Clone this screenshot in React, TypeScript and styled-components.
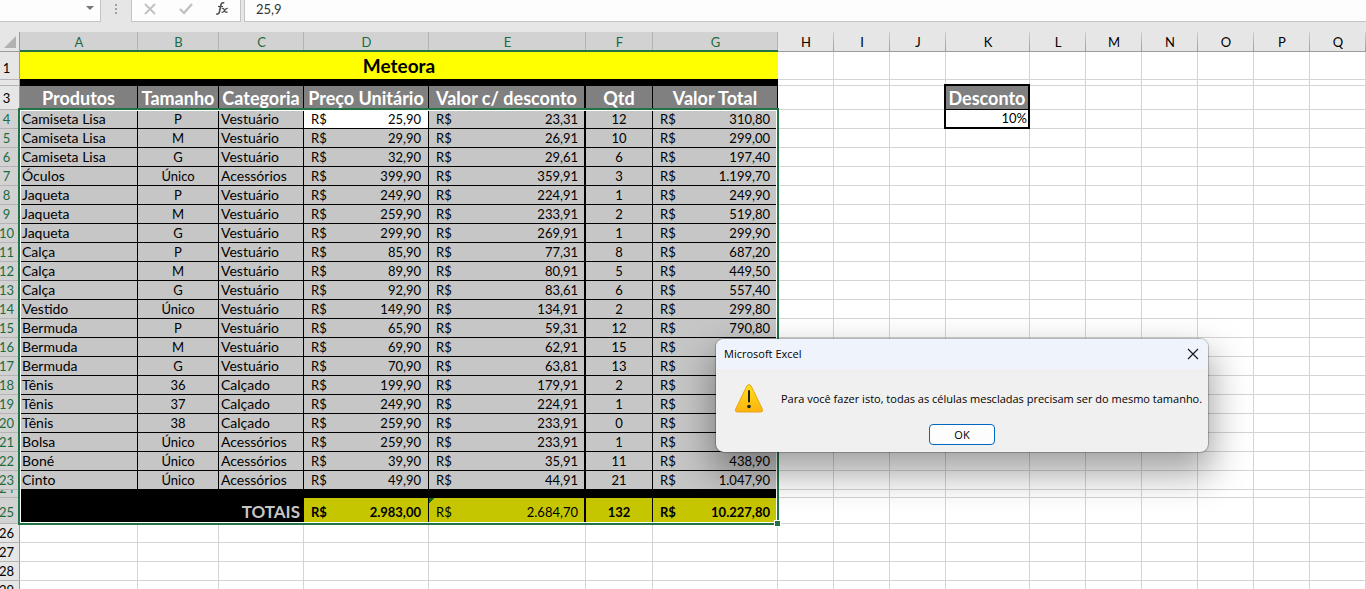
import React from "react";
import styled, { createGlobalStyle, css } from "styled-components";

const GREEN = "#217346";
const GRID = "#d4d4d4";
const CHROME = "#e6e6e6";
const SELECTED = "#c6c6c6";

const GlobalStyle = createGlobalStyle`
  *, *::before, *::after { box-sizing: border-box; }
  body { margin: 0; background: #fff; }
  button, input { font: inherit; color: inherit; margin: 0; padding: 0; }
`;

const Page = styled.main`
  display: flex;
  flex-direction: column;
  height: 100vh;
  overflow: hidden;
  font-family: Lato, "Liberation Sans", sans-serif;
  font-size: 13px;
  line-height: 18px;
  color: #000;
`;

/* ---------- formula bar ---------- */

const FormulaBar = styled.div`
  display: flex;
  flex: none;
  height: 32px;
  padding-bottom: 10px;
  background: ${CHROME};
`;

const NameBox = styled.div`
  display: flex;
  width: 101px;
  background: #fdfdfd;
  border: solid #c3c3c3;
  border-width: 0 1px 1px 0;
`;

const NameInput = styled.input`
  flex: 1;
  min-width: 0;
  border: 0;
  background: none;
`;

const DropButton = styled.button`
  display: flex;
  justify-content: center;
  width: 20px;
  padding-top: 6px;
  border: 0;
  background: none;
`;

const Grip = styled.div`
  display: flex;
  justify-content: center;
  width: 30px;
  padding-top: 4px;
`;

const FormulaActions = styled.div`
  display: flex;
  width: 110px;
  margin-right: 3px;
  background: #fdfdfd;
  border: solid #c3c3c3;
  border-width: 0 1px 1px;
`;

const ActionButton = styled.button`
  display: flex;
  flex: 1;
  align-items: flex-start;
  justify-content: center;
  border: 0;
  background: none;
`;

const FormulaInput = styled.input`
  flex: 1;
  min-width: 0;
  && { padding: 0 11px 3px; }
  border: solid #c3c3c3;
  border-width: 0 0 1px 1px;
  background: #fdfdfd;
  color: #333;
`;

/* ---------- sheet ---------- */

const SheetArea = styled.div`
  position: relative;
  flex: 1;
  min-height: 0;
  overflow: hidden;
`;

const Sheet = styled.table`
  width: 100%;
  min-width: 1366px;
  table-layout: fixed;
  border-collapse: separate;
  border-spacing: 0;
`;

const Col = styled.col<{ $w?: number }>`
  width: ${(p) => (p.$w ? `${p.$w}px` : "auto")};
`;

const Row = styled.tr<{ $h: number }>`
  height: ${(p) => p.$h}px;
  line-height: ${(p) => (p.$h > 22 ? 22 : 18)}px;
`;

const Corner = styled.td`
  padding: 4px 3px 3px 4px;
  line-height: 0;
  background: ${CHROME};
  border: solid #9b9b9b;
  border-width: 0 1px 1px 0;
  vertical-align: top;
`;

const ColumnHead = styled.th<{ $on: boolean }>`
  padding: 0;
  font-weight: 400;
  vertical-align: bottom;
  color: ${(p) => (p.$on ? "#1c6b40" : "#000")};
  background:
    linear-gradient(${(p) => (p.$on ? "#b4b4b4, #b4b4b4" : "#cfcfcf, #9b9b9b")}) right / 1px 100% no-repeat
    ${(p) => (p.$on ? "#d2d2d2" : CHROME)};
  border-bottom: 1px solid ${(p) => (p.$on ? GREEN : "#9b9b9b")};
  box-shadow: ${(p) => (p.$on ? `inset 0 -1px ${GREEN}` : "none")};
`;

const RowHead = styled.th<{ $on: boolean }>`
  padding: 0 6px 0 0;
  font-weight: 400;
  vertical-align: bottom;
  color: ${(p) => (p.$on ? "#1c6b40" : "#000")};
  background: ${(p) => (p.$on ? "#d2d2d2" : CHROME)};
  border: solid #9b9b9b;
  border-width: 0 1px 1px 0;
  border-bottom-color: #b4b4b4;
`;

const RowNumber = styled.div<{ $h: number }>`
  display: flex;
  align-items: flex-end;
  justify-content: center;
  height: ${(p) => p.$h - 1}px;
  overflow: ${(p) => (p.$h < 18 ? "hidden" : "visible")};
`;

const Cell = styled.td`
  padding: 0;
  vertical-align: bottom;
  white-space: nowrap;
  border: solid ${GRID};
  border-width: 0 1px 1px 0;
`;

const TitleCell = styled(Cell)`
  background: #ff0;
  border-color: #000;
  border-right: 0;
  font-size: 19px;
  font-weight: 700;
  line-height: 26px;
  text-align: center;
`;

const Band = styled(Cell)`
  background: #000;
  border-color: #000;
`;

const HeadCell = styled.th<{ $thick?: boolean }>`
  padding: 0;
  vertical-align: bottom;
  white-space: nowrap;
  background: #808080;
  color: #fff;
  font-size: 18px;
  font-weight: 700;
  text-align: center;
  border: solid #000;
  border-width: 0 ${(p) => (p.$thick ? 2 : 1)}px 1px 0;
`;

const DataCell = styled(Cell)<{ $align?: string; $thick?: boolean; $active?: boolean }>`
  padding: 0 ${(p) => (p.$thick ? 1 : 2)}px 0 2px;
  background: ${(p) => (p.$active ? "#fff" : SELECTED)};
  border-color: #000;
  border-right-width: ${(p) => (p.$thick ? 2 : 1)}px;
  text-align: ${(p) => p.$align ?? "left"};
`;

const LabelCell = styled(DataCell)`
  font-size: 14px;
`;

const TotalCell = styled(DataCell)<{ $bold?: boolean; $flag?: boolean }>`
  background: #c6c600;
  font-weight: ${(p) => (p.$bold ? 700 : 400)};
  ${(p) =>
    p.$flag &&
    css`
      background: linear-gradient(135deg, #0b6b12 4px, transparent 4px), #c6c600;
    `}
`;

const TotalLabel = styled(Cell)`
  padding: 0 3px;
  background: #000;
  border-color: #000;
  color: ${SELECTED};
  font-size: 17px;
  font-weight: 700;
  text-align: right;
`;

const MoneyRow = styled.div`
  display: flex;
  justify-content: space-between;
  padding: 0 5px;
`;

const DiscountHead = styled(HeadCell)`
  border-width: 0 2px 1px 0;
  box-shadow: -2px 0 #000, 0 -2px #000, -2px -2px #000;
`;

const DiscountCell = styled(Cell)`
  padding-right: 1px;
  background: #fff;
  border: solid #000;
  border-width: 0 2px 2px 0;
  box-shadow: -2px 0 #000;
  line-height: 17px;
  text-align: right;
`;

const SelectionFrame = styled.div`
  position: absolute;
  top: 76px;
  left: 18px;
  width: 761px;
  height: 417px;
  border: 2px solid ${GREEN};
  box-shadow: inset 0 0 0 1px #fff;
  pointer-events: none;

  &::after {
    content: "";
    position: absolute;
    right: -4px;
    bottom: -4px;
    width: 7px;
    height: 7px;
    background: ${GREEN};
    border: 1px solid #fff;
  }
`;

/* ---------- message box ---------- */

const Dialog = styled.section`
  position: absolute;
  top: 339px;
  left: 716px;
  width: 492px;
  overflow: hidden;
  border-radius: 8px;
  background: #f0f0f0;
  box-shadow: 0 0 1px 1px rgba(0, 0, 0, 0.25), 0 18px 36px 4px rgba(0, 0, 0, 0.36);
  font-family: "Open Sans", "Noto Sans", sans-serif;
  font-size: 11px;
  line-height: 16px;
`;

const DialogTitle = styled.header`
  display: flex;
  align-items: center;
  justify-content: space-between;
  height: 30px;
  padding: 0 9px 0 8px;
  background: #eff3fb;
`;

const DialogName = styled.h1`
  margin: 0;
  font-size: 11px;
  font-weight: 400;
`;

const CloseButton = styled.button`
  display: flex;
  padding: 0;
  border: 0;
  background: none;
`;

const DialogBody = styled.div`
  display: flex;
  align-items: center;
  gap: 17px;
  padding: 15px 12px 0 18px;

  svg { flex: none; }
`;

const Message = styled.p`
  margin: 0;
  white-space: nowrap;
`;

const DialogFooter = styled.footer`
  display: flex;
  justify-content: center;
  padding: 10px 0 7px;
`;

const OkButton = styled.button`
  width: 66px;
  height: 21px;
  border: 1px solid #0067c0;
  border-radius: 4px;
  background: #fdfdfd;
`;

/* ---------- data ---------- */

const columns: { name: string; w?: number }[] = [
  { name: "A", w: 118 },
  { name: "B", w: 81 },
  { name: "C", w: 85 },
  { name: "D", w: 125 },
  { name: "E", w: 157 },
  { name: "F", w: 67 },
  { name: "G", w: 125 },
  { name: "H", w: 56 },
  { name: "I", w: 56 },
  { name: "J", w: 56 },
  { name: "K", w: 84 },
  { name: "L", w: 56 },
  { name: "M", w: 56 },
  { name: "N", w: 56 },
  { name: "O", w: 56 },
  { name: "P", w: 56 },
  { name: "Q" },
];

const headings = ["Produtos", "Tamanho", "Categoria", "Preço Unitário", "Valor c/ desconto", "Qtd", "Valor Total"];

const products: string[][] = [
  ["Camiseta Lisa", "P", "Vestuário", "25,90", "23,31", "12", "310,80"],
  ["Camiseta Lisa", "M", "Vestuário", "29,90", "26,91", "10", "299,00"],
  ["Camiseta Lisa", "G", "Vestuário", "32,90", "29,61", "6", "197,40"],
  ["Óculos", "Único", "Acessórios", "399,90", "359,91", "3", "1.199,70"],
  ["Jaqueta", "P", "Vestuário", "249,90", "224,91", "1", "249,90"],
  ["Jaqueta", "M", "Vestuário", "259,90", "233,91", "2", "519,80"],
  ["Jaqueta", "G", "Vestuário", "299,90", "269,91", "1", "299,90"],
  ["Calça", "P", "Vestuário", "85,90", "77,31", "8", "687,20"],
  ["Calça", "M", "Vestuário", "89,90", "80,91", "5", "449,50"],
  ["Calça", "G", "Vestuário", "92,90", "83,61", "6", "557,40"],
  ["Vestido", "Único", "Vestuário", "149,90", "134,91", "2", "299,80"],
  ["Bermuda", "P", "Vestuário", "65,90", "59,31", "12", "790,80"],
  ["Bermuda", "M", "Vestuário", "69,90", "62,91", "15", ""],
  ["Bermuda", "G", "Vestuário", "70,90", "63,81", "13", ""],
  ["Tênis", "36", "Calçado", "199,90", "179,91", "2", ""],
  ["Tênis", "37", "Calçado", "249,90", "224,91", "1", ""],
  ["Tênis", "38", "Calçado", "259,90", "233,91", "0", ""],
  ["Bolsa", "Único", "Acessórios", "259,90", "233,91", "1", ""],
  ["Boné", "Único", "Acessórios", "39,90", "35,91", "11", "438,90"],
  ["Cinto", "Único", "Acessórios", "49,90", "44,91", "21", "1.047,90"],
];

const Money = ({ value }: { value: string }) => (
  <MoneyRow>
    <span>R$</span>
    <span>{value}</span>
  </MoneyRow>
);

const Blank = ({ count }: { count: number }) => (
  <>
    {Array.from({ length: count }, (_, i) => (
      <Cell key={i} />
    ))}
  </>
);

const SheetRow = ({ n, h = 19, children }: { n: number; h?: number; children: React.ReactNode }) => (
  <Row $h={h}>
    <RowHead scope="row" $on={n >= 4 && n <= 25}>
      <RowNumber $h={h}>{n === 2 ? null : n}</RowNumber>
    </RowHead>
    {children}
  </Row>
);

const ProductRow = ({ n, item }: { n: number; item: string[] }) => (
  <SheetRow n={n}>
    <LabelCell>{item[0]}</LabelCell>
    <DataCell $align="center">{item[1]}</DataCell>
    <LabelCell>{item[2]}</LabelCell>
    <DataCell $active={n === 4}>
      <Money value={item[3]} />
    </DataCell>
    <DataCell $thick>
      <Money value={item[4]} />
    </DataCell>
    <DataCell $align="center">{item[5]}</DataCell>
    <DataCell>
      <Money value={item[6]} />
    </DataCell>
    {n === 4 ? (
      <>
        <Blank count={3} />
        <DiscountCell>10%</DiscountCell>
        <Blank count={6} />
      </>
    ) : (
      <Blank count={10} />
    )}
  </SheetRow>
);

const WarningIcon = () => (
  <svg width="30" height="30" viewBox="0 0 30 30" aria-hidden="true">
    <defs>
      <linearGradient id="warn" x1="0" y1="0" x2="0" y2="1">
        <stop offset="0" stopColor="#ffe11a" />
        <stop offset="1" stopColor="#fdb30f" />
      </linearGradient>
    </defs>
    <path
      d="M12.9 1.9Q15 -1 17.1 1.9L28.4 25.2Q29.3 27.9 26.8 28H3.2Q.7 27.9 1.6 25.2Z"
      fill="url(#warn)"
      stroke="#e9a21a"
      strokeWidth="1"
    />
    <path d="M15 7V17.5" stroke="#1e1e1e" strokeWidth="2" strokeLinecap="round" />
    <circle cx="15" cy="22.5" r="1.8" fill="#1e1e1e" />
  </svg>
);

export default function App() {
  return (
    <Page>
      <GlobalStyle />
      <FormulaBar>
        <NameBox>
          <NameInput aria-label="Caixa de nome" />
          <DropButton aria-label="Abrir lista de nomes">
            <svg width="8" height="4" viewBox="0 0 8 4">
              <path d="M0 0H8L4 4Z" fill="#777" />
            </svg>
          </DropButton>
        </NameBox>
        <Grip>
          <svg width="2" height="11" viewBox="0 0 2 11">
            <path d="M0 0h2v2H0zM0 4h2v2H0zM0 8h2v2H0z" fill="#a0a0a0" />
          </svg>
        </Grip>
        <FormulaActions>
          <ActionButton aria-label="Cancelar">
            <svg width="14" height="16" viewBox="0 0 14 16">
              <path d="M2 4L12 14M12 4L2 14" stroke="#c2c2c2" strokeWidth="2" />
            </svg>
          </ActionButton>
          <ActionButton aria-label="Inserir">
            <svg width="14" height="16" viewBox="0 0 14 16">
              <path d="M1 9L5 13L13 4" fill="none" stroke="#c2c2c2" strokeWidth="2.4" />
            </svg>
          </ActionButton>
          <ActionButton aria-label="Inserir função">
            <svg width="14" height="16" viewBox="0 0 14 16" fill="none" stroke="#4f4f4f">
              <path d="M9 3.4Q8.4 2.2 7 3Q6 3.6 5.4 7L4.4 12Q3.8 14.6 1.2 14" strokeWidth="1.6" />
              <path d="M3 6.5H8" strokeWidth="1.2" />
              <path d="M6.8 8.5Q8.6 7.8 9.4 10.2Q10.2 13 12.6 12M12.8 8.5Q11.4 8 9.8 10.2Q8.4 12.8 6.6 12.2" strokeWidth="1.3" />
            </svg>
          </ActionButton>
        </FormulaActions>
        <FormulaInput aria-label="Barra de fórmulas" defaultValue="25,9" />
      </FormulaBar>

      <SheetArea>
        <Sheet>
          <colgroup>
            <Col $w={20} />
            {columns.map((c) => (
              <Col key={c.name} $w={c.w} />
            ))}
          </colgroup>
          <thead>
            <Row $h={20}>
              <Corner>
                <svg width="12" height="12" viewBox="0 0 12 12">
                  <path d="M12 0V12H0Z" fill="#b1b1b1" />
                </svg>
              </Corner>
              {columns.map((c, i) => (
                <ColumnHead key={c.name} scope="col" $on={i < 7}>
                  {c.name}
                </ColumnHead>
              ))}
            </Row>
          </thead>
          <tbody>
            <SheetRow n={1} h={28}>
              <TitleCell colSpan={7}>Meteora</TitleCell>
              <Blank count={10} />
            </SheetRow>
            <SheetRow n={2} h={6}>
              <Band colSpan={7} />
              <Blank count={10} />
            </SheetRow>
            <SheetRow n={3} h={24}>
              {headings.map((text, i) => (
                <HeadCell key={text} $thick={i === 4}>
                  {text}
                </HeadCell>
              ))}
              <Blank count={3} />
              <DiscountHead>Desconto</DiscountHead>
              <Blank count={6} />
            </SheetRow>
            {products.map((item, i) => (
              <ProductRow key={i} n={i + 4} item={item} />
            ))}
            <SheetRow n={24} h={8}>
              <Band colSpan={7} />
              <Blank count={10} />
            </SheetRow>
            <SheetRow n={25} h={26}>
              <TotalLabel colSpan={3}>TOTAIS</TotalLabel>
              <TotalCell $bold>
                <Money value="2.983,00" />
              </TotalCell>
              <TotalCell $thick $flag>
                <Money value="2.684,70" />
              </TotalCell>
              <TotalCell $bold $align="center">
                132
              </TotalCell>
              <TotalCell $bold>
                <Money value="10.227,80" />
              </TotalCell>
              <Blank count={10} />
            </SheetRow>
            {[26, 27, 28, 29].map((n) => (
              <SheetRow key={n} n={n}>
                <Blank count={17} />
              </SheetRow>
            ))}
          </tbody>
        </Sheet>
        <SelectionFrame />
      </SheetArea>

      <Dialog role="alertdialog" aria-labelledby="dialog-name" aria-describedby="dialog-message">
        <DialogTitle>
          <DialogName id="dialog-name">Microsoft Excel</DialogName>
          <CloseButton aria-label="Fechar">
            <svg width="12" height="12" viewBox="0 0 12 12">
              <path d="M1 1L11 11M11 1L1 11" stroke="#1a1a1a" strokeWidth="1.2" />
            </svg>
          </CloseButton>
        </DialogTitle>
        <DialogBody>
          <WarningIcon />
          <Message id="dialog-message">
            Para você fazer isto, todas as células mescladas precisam ser do mesmo tamanho.
          </Message>
        </DialogBody>
        <DialogFooter>
          <OkButton>OK</OkButton>
        </DialogFooter>
      </Dialog>
    </Page>
  );
}
